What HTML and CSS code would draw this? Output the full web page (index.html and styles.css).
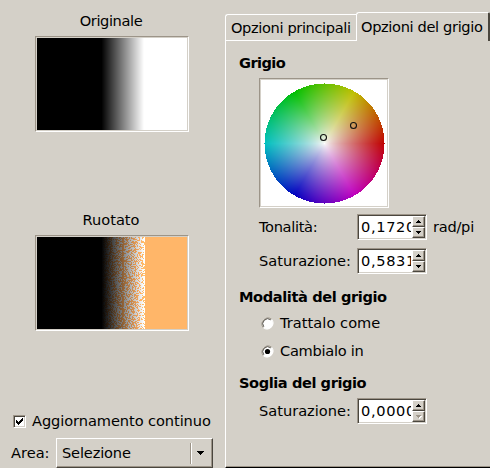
FILE: index.html
```html
<!DOCTYPE html>
<html lang="it">
<head>
<meta charset="utf-8">
<title>Rotazione mappa colore</title>
<link rel="stylesheet" href="styles.css">
</head>
<body>
<div class="dialog">
  <section class="previews">
    <div class="label"><span class="t-orig">Originale</span></div>
    <div class="frame preview"><canvas id="original" width="150" height="92"></canvas></div>
    <div class="label second"><span class="t-ruot">Ruotato</span></div>
    <div class="frame preview"><canvas id="rotated" width="150" height="92"></canvas></div>
    <label class="check-row">
      <span class="check"><svg width="9" height="9" shape-rendering="crispEdges"><path d="M1 3h1v1h1v1h1v-1h1v-1h1v-1h1v-1h1v3h-1v1h-1v1h-1v1h-1v1h-1v-1h-1v-1h-1z"/></svg></span>
      <span class="t-agg">Aggiornamento continuo</span>
    </label>
    <div class="area-row">
      <span class="t-area">Area:</span>
      <div class="combo"><span class="t-sel">Selezione</span><i class="divider"></i><svg width="7" height="4" shape-rendering="crispEdges"><path d="M0 0h7v1h-1v1h-1v1h-1v1h-1v-1h-1v-1h-1v-1h-1z"/></svg></div>
    </div>
  </section>
  <section class="notebook">
    <div class="tabs">
      <div class="tab"><span class="t-princ">Opzioni principali</span></div>
      <div class="tab active"><span class="t-del">Opzioni del grigio</span></div>
    </div>
    <div class="page">
      <h2><span class="t-grigio">Grigio</span></h2>
      <div class="frame wheel"><canvas id="wheel" width="126" height="126"></canvas>
        <svg class="marks" width="126" height="126"><circle cx="62.5" cy="57.5" r="3"/><circle cx="92.5" cy="45.5" r="3"/></svg>
      </div>
      <div class="field hue"><span class="name"><span class="t-ton">Tonalità:</span></span>
        <div class="spin"><span class="value">0,1720</span><span class="arrows"><b><svg width="5" height="3" shape-rendering="crispEdges"><path d="M2 0h1v1h1v1h1v1h-5v-1h1v-1h1z"/></svg></b><b><svg width="5" height="3" shape-rendering="crispEdges"><path d="M0 0h5v1h-1v1h-1v1h-1v-1h-1v-1h-1z"/></svg></b></span></div>
        <span class="unit t-rad">rad/pi</span></div>
      <div class="field sat"><span class="name"><span class="t-sat">Saturazione:</span></span>
        <div class="spin"><span class="value">0,5831</span><span class="arrows"><b><svg width="5" height="3" shape-rendering="crispEdges"><path d="M2 0h1v1h1v1h1v1h-5v-1h1v-1h1z"/></svg></b><b><svg width="5" height="3" shape-rendering="crispEdges"><path d="M0 0h5v1h-1v1h-1v1h-1v-1h-1v-1h-1z"/></svg></b></span></div></div>
      <h2 class="mode"><span class="t-mod">Modalità del grigio</span></h2>
      <label class="radio-row"><svg class="radio" width="13" height="13"><circle cx="6.5" cy="6.5" r="5.5" class="face"/><path class="dark" d="M2.3 10.7A6 6 0 0 1 10.7 2.3"/><path class="lite" d="M10.7 2.3A6 6 0 0 1 2.3 10.7"/><path class="inner" d="M2.8 9.8A5 5 0 0 1 9.8 2.8"/></svg><span class="t-tra">Trattalo come</span></label>
      <label class="radio-row"><svg class="radio" width="13" height="13"><circle cx="6.5" cy="6.5" r="5.5" class="face"/><path class="dark" d="M2.3 10.7A6 6 0 0 1 10.7 2.3"/><path class="lite" d="M10.7 2.3A6 6 0 0 1 2.3 10.7"/><path class="inner" d="M2.8 9.8A5 5 0 0 1 9.8 2.8"/><circle cx="6.5" cy="6.5" r="2.6"/></svg><span class="t-cam">Cambialo in</span></label>
      <h2 class="threshold"><span class="t-sog">Soglia del grigio</span></h2>
      <div class="field last"><span class="name"><span class="t-sat">Saturazione:</span></span>
        <div class="spin"><span class="value">0,0000</span><span class="arrows"><b><svg width="5" height="3" shape-rendering="crispEdges"><path d="M2 0h1v1h1v1h1v1h-5v-1h1v-1h1z"/></svg></b><b class="off"><svg width="5" height="3" shape-rendering="crispEdges"><path d="M0 0h5v1h-1v1h-1v1h-1v-1h-1v-1h-1z"/></svg></b></span></div></div>
    </div>
  </section>
</div>
<script src="script.js"></script>
</body>
</html>
```
FILE: styles.css
```css
* { box-sizing: border-box; }
body {
  margin: 0;
  background: #d4d0c8;
  color: #000;
  font: 14.6px/18px "DejaVu Sans", sans-serif;
  overflow: hidden;
}
svg, canvas { display: block; flex: none; }
span { white-space: nowrap; }
.dialog { display: flex; width: 490px; height: 468px; }
.previews { width: 225px; flex: none; padding-top: 12px; }
.label { margin-left: 34px; width: 154px; text-align: center; }
.label.second { margin-top: 79px; }
.frame {
  border: 1px solid;
  border-color: #9c9488 #fff #fff #9c9488;
  padding: 1px;
  background: #d4d0c8;
}
.preview { width: 154px; height: 96px; margin: 6px 0 0 35px; }
.label.second + .preview { margin-top: 6px; }
.check-row { display: flex; align-items: center; margin: 81px 0 0 13px; height: 18px; gap: 6px; }
.check {
  width: 13px; height: 13px; padding: 1px; background: #fff;
  border: 1px solid; border-color: #9c9488 #fff #fff #9c9488;
  box-shadow: inset 1px 1px #4a463e, inset -1px -1px #d4d0c8;
}
.area-row { display: flex; align-items: center; margin: 8px 0 0 11px; height: 30px; }
.area-row > span { width: 45px; }
.combo {
  display: flex; align-items: center; width: 157px; height: 30px; padding-left: 5px;
  border: 1px solid; border-color: #fff #4a463e #4a463e #fff;
  box-shadow: inset -1px -1px #9c9488;
}
.combo > span { width: 128px; }
.divider { width: 2px; height: 21px; background: #fff; border-left: 1px solid #9c9488; margin-right: 5px; }
.notebook { width: 265px; flex: none; padding-top: 12px; display: flex; flex-direction: column; }
.tabs { display: flex; height: 29px; align-items: flex-end; }
.tab {
  width: 131px; height: 27px; padding: 4px 0 0 5px;
  border: 1px solid #fff; border-radius: 3px 0 0 0; border-right: 0;
}
.tab.active {
  width: 134px; height: 29px; padding: 5px 0 0 4px;
  border-bottom: 0; border-right: 2px solid #4a463e;
  border-radius: 3px 2px 0 0;
}
.page { flex: 1; border-left: 1px solid #fff; border-bottom: 1px solid #000; box-shadow: inset 0 -1px #9c9488; padding: 13px 0 0 13px; }
h2 { margin: 0; font-size: 14.6px; line-height: 18px; height: 18px; }
.wheel { position: relative; width: 130px; height: 130px; margin: 6px 0 0 20px; }
.marks { position: absolute; left: 1px; top: 1px; fill: none; stroke: #111; stroke-width: 1.1; }
.field { display: flex; align-items: center; margin-left: 20px; height: 26px; }
.hue { margin-top: 6px; }
.sat { margin-top: 8px; }
.name { width: 98px; flex: none; }
.spin {
  display: flex; width: 70px; height: 26px; flex: none; background: #fff; padding: 1px;
  border: 1px solid; border-color: #9c9488 #fff #fff #9c9488;
  box-shadow: inset 1px 1px #4a463e, inset -1px -1px #d4d0c8;
}
.value { width: 52px; padding-left: 2px; line-height: 22px; overflow: hidden; letter-spacing: .65px; }
.arrows { display: flex; flex-direction: column; width: 13px; margin-left: 1px; }
.arrows b {
  flex: 1; display: flex; align-items: center; justify-content: center; background: #d4d0c8;
  border: 1px solid; border-color: #fff #4a463e #4a463e #fff;
  box-shadow: inset -1px -1px #9c9488;
}
.arrows .off svg { fill: #9c9488; filter: drop-shadow(1px 1px #fff); }
.unit { margin-left: 6px; }
.mode { margin-top: 14px; }
.radio-row { display: flex; align-items: center; height: 18px; margin: 8px 0 0 22px; gap: 6px; }
.radio-row + .radio-row { margin-top: 10px; }
.face { fill: #fff; }
.dark, .lite, .inner { fill: none; stroke: #9c9488; }
.lite { stroke: #fff; }
.inner { stroke: #4a463e; stroke-width: .9; }
.threshold { margin-top: 14px; }
.last { margin-top: 6px; }

/* Per-label tracking */
.t-orig { letter-spacing: -.4px; }
.t-princ { letter-spacing: -.37px; }
.t-del { letter-spacing: -.35px; }
.t-grigio { letter-spacing: -.6px; }
.t-agg { letter-spacing: -.08px; }
.t-sel { letter-spacing: -.15px; }
.t-ton { letter-spacing: -.33px; }
.t-rad { letter-spacing: -.25px; }
.t-mod { letter-spacing: -.4px; }
.t-tra { letter-spacing: .04px; }
.t-cam { letter-spacing: -.27px; }
.t-sog { letter-spacing: -.43px; }
```
FILE: script.js
```js
function paint(id, colorAt) {
  const canvas = document.getElementById(id);
  const ctx = canvas.getContext('2d');
  const image = ctx.createImageData(canvas.width, canvas.height);
  for (let y = 0; y < canvas.height; y++) {
    for (let x = 0; x < canvas.width; x++) {
      const c = colorAt(x, y);
      const i = (y * canvas.width + x) * 4;
      image.data[i] = c[0];
      image.data[i + 1] = c[1];
      image.data[i + 2] = c[2];
      image.data[i + 3] = 255;
    }
  }
  ctx.putImageData(image, 0, 0);
}

let seed = 77123;
function random() {
  seed = (seed * 1664525 + 1013904223) % 4294967296;
  return seed / 4294967296;
}

function hsv(h, s, v) {
  const f = n => {
    const k = (n + h * 6) % 6;
    return 255 * v * (1 - s * Math.max(0, Math.min(k, 4 - k, 1)));
  };
  return [f(5), f(3), f(1)];
}

const ramp = x => Math.max(0, Math.min(255, (x - 64) * 6));

paint('original', x => [ramp(x), ramp(x), ramp(x)]);

paint('rotated', x => {
  const v = ramp(x);
  const tinted = [Math.min(255, v * 1.1), v * 0.75, v * 0.42];
  if (x > 107) return [255, 182, 105];
  let chance = x > 101 ? 0.35 : 0.48;
  if (x === 85 || x === 86) chance = 0.92;
  if (x === 107) chance = 0.25;
  return random() < chance ? tinted : [v, v, v];
});

/* Hue runs counter-clockwise from red; value drops towards the rim. */
paint('wheel', (x, y) => {
  const dx = x - 63;
  const dy = 63 - y;
  const s = Math.hypot(dx, dy) / 60;
  if (s > 1) return [255, 255, 255];
  const h = (Math.atan2(dy, dx) / (2 * Math.PI) + 1) % 1;
  return hsv(h, s, 1 - Math.sqrt(s) / 4);
});
```
